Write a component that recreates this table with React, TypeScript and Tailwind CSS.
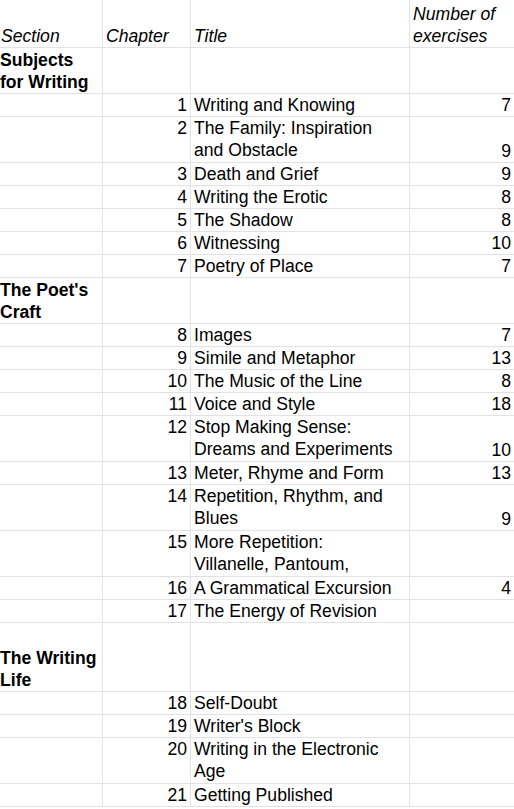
import React from "react"

type Row = {
  section?: string[]
  chapter?: number
  title?: string[]
  count?: number
  lines: number
}

const ROWS: Row[] = [
  { section: ["Subjects", "for Writing"], lines: 2 },
  { chapter: 1, title: ["Writing and Knowing"], count: 7, lines: 1 },
  { chapter: 2, title: ["The Family: Inspiration", "and Obstacle"], count: 9, lines: 2 },
  { chapter: 3, title: ["Death and Grief"], count: 9, lines: 1 },
  { chapter: 4, title: ["Writing the Erotic"], count: 8, lines: 1 },
  { chapter: 5, title: ["The Shadow"], count: 8, lines: 1 },
  { chapter: 6, title: ["Witnessing"], count: 10, lines: 1 },
  { chapter: 7, title: ["Poetry of Place"], count: 7, lines: 1 },
  { section: ["The Poet's", "Craft"], lines: 2 },
  { chapter: 8, title: ["Images"], count: 7, lines: 1 },
  { chapter: 9, title: ["Simile and Metaphor"], count: 13, lines: 1 },
  { chapter: 10, title: ["The Music of the Line"], count: 8, lines: 1 },
  { chapter: 11, title: ["Voice and Style"], count: 18, lines: 1 },
  { chapter: 12, title: ["Stop Making Sense:", "Dreams and Experiments"], count: 10, lines: 2 },
  { chapter: 13, title: ["Meter, Rhyme and Form"], count: 13, lines: 1 },
  { chapter: 14, title: ["Repetition, Rhythm, and", "Blues"], count: 9, lines: 2 },
  { chapter: 15, title: ["More Repetition:", "Villanelle, Pantoum,"], lines: 2 },
  { chapter: 16, title: ["A Grammatical Excursion"], count: 4, lines: 1 },
  { chapter: 17, title: ["The Energy of Revision"], lines: 1 },
  { section: ["The Writing", "Life"], lines: 3 },
  { chapter: 18, title: ["Self-Doubt"], lines: 1 },
  { chapter: 19, title: ["Writer's Block"], lines: 1 },
  { chapter: 20, title: ["Writing in the Electronic", "Age"], lines: 2 },
  { chapter: 21, title: ["Getting Published"], lines: 1 },
]

const HEIGHT: Record<number, string> = {
  1: "h-[23px]",
  2: "h-[46px]",
  3: "h-[69px]",
}

function Lines({ text }: { text?: string[] }) {
  if (!text) return null
  return (
    <>
      {text.map((t) => (
        <span key={t} className="block whitespace-nowrap">
          {t}
        </span>
      ))}
    </>
  )
}

export default function App() {
  return (
    <div
      className="h-[809px] w-[514px] overflow-hidden bg-white text-[17.6px] leading-[22px] text-black"
      style={{ fontFamily: '"Liberation Sans", Arial, sans-serif' }}
    >
      {/* header */}
      <div className="flex h-[48px] border-b border-[#e2e2e2] italic">
        <div className="flex w-[103px] flex-col justify-end border-r border-[#e2e2e2] pl-[1px]">Section</div>
        <div className="flex w-[88px] flex-col justify-end border-r border-[#e2e2e2] pl-[3px]">Chapter</div>
        <div className="flex w-[219px] flex-col justify-end border-r border-[#e2e2e2] pl-[3px]">Title</div>
        <div className="flex flex-1 flex-col justify-end pl-[3px]">
          <span className="block">Number of</span>
          <span className="block">exercises</span>
        </div>
      </div>

      {ROWS.map((r, i) => (
        <div key={i} className={`flex border-b border-[#e2e2e2] ${HEIGHT[r.lines]}`}>
          <div className="flex w-[103px] flex-col justify-end overflow-hidden border-r border-[#e2e2e2] font-bold">
            <Lines text={r.section} />
          </div>
          <div className="w-[88px] border-r border-[#e2e2e2] pr-[3px] text-right">{r.chapter}</div>
          <div className="w-[219px] overflow-hidden border-r border-[#e2e2e2] pl-[3px]">
            <Lines text={r.title} />
          </div>
          <div className="flex flex-1 flex-col justify-end pr-[3px] text-right">{r.count}</div>
        </div>
      ))}
    </div>
  )
}
